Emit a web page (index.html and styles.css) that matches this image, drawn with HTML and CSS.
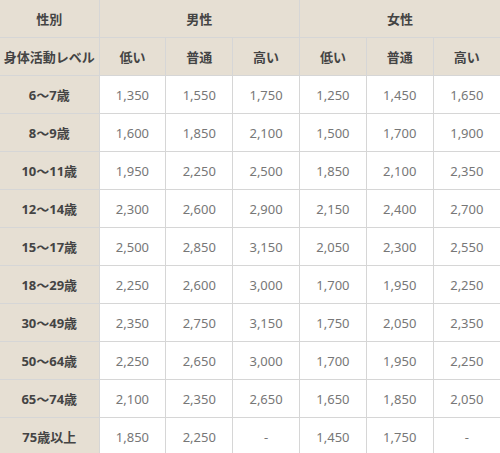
FILE: index.html
```html
<!DOCTYPE html>
<html lang="ja">
<head>
<meta charset="utf-8">
<link rel="stylesheet" href="styles.css">
</head>
<body>
<table class="energy">
  <colgroup>
    <col class="c-first">
    <col class="c-val"><col class="c-val"><col class="c-val">
    <col class="c-val"><col class="c-val"><col class="c-val">
  </colgroup>
  <thead>
    <tr><th>性別</th><th colspan="3">男性</th><th colspan="3">女性</th></tr>
    <tr><th>身体活動レベル</th><th>低い</th><th>普通</th><th>高い</th><th>低い</th><th>普通</th><th>高い</th></tr>
  </thead>
  <tbody>
    <tr><th>6〜7歳</th><td>1,350</td><td>1,550</td><td>1,750</td><td>1,250</td><td>1,450</td><td>1,650</td></tr>
    <tr><th>8〜9歳</th><td>1,600</td><td>1,850</td><td>2,100</td><td>1,500</td><td>1,700</td><td>1,900</td></tr>
    <tr><th>10〜11歳</th><td>1,950</td><td>2,250</td><td>2,500</td><td>1,850</td><td>2,100</td><td>2,350</td></tr>
    <tr><th>12〜14歳</th><td>2,300</td><td>2,600</td><td>2,900</td><td>2,150</td><td>2,400</td><td>2,700</td></tr>
    <tr><th>15〜17歳</th><td>2,500</td><td>2,850</td><td>3,150</td><td>2,050</td><td>2,300</td><td>2,550</td></tr>
    <tr><th>18〜29歳</th><td>2,250</td><td>2,600</td><td>3,000</td><td>1,700</td><td>1,950</td><td>2,250</td></tr>
    <tr><th>30〜49歳</th><td>2,350</td><td>2,750</td><td>3,150</td><td>1,750</td><td>2,050</td><td>2,350</td></tr>
    <tr><th>50〜64歳</th><td>2,250</td><td>2,650</td><td>3,000</td><td>1,700</td><td>1,950</td><td>2,250</td></tr>
    <tr><th>65〜74歳</th><td>2,100</td><td>2,350</td><td>2,650</td><td>1,650</td><td>1,850</td><td>2,050</td></tr>
    <tr><th>75歳以上</th><td>1,850</td><td>2,250</td><td>-</td><td>1,450</td><td>1,750</td><td>-</td></tr>
  </tbody>
</table>
</body>
</html>
```
FILE: styles.css
```css
html, body {
  margin: 0;
  padding: 0;
  background: #fff;
}
.energy {
  width: 500px;
  height: 453px;
  border-collapse: collapse;
  table-layout: fixed;
  font-family: "Noto Sans", "Noto Sans CJK JP", sans-serif;
  font-size: 13px;
}
.c-first { width: 99px; }
.energy th,
.energy td {
  border: 1px solid #d6d6d6;
  text-align: center;
  vertical-align: middle;
  padding: 0;
  height: 37px;
}
.energy tr:first-child th { border-top: none; }
.energy tr > :first-child { border-left: none; }
.energy tr > :last-child { border-right: none; }
.energy tbody tr:last-child > * { border-bottom: none; }
.energy th {
  background: #e6dfd3;
  color: #444;
  font-weight: bold;
}
.energy td {
  background: #fff;
  color: #777;
  font-weight: normal;
}
```
